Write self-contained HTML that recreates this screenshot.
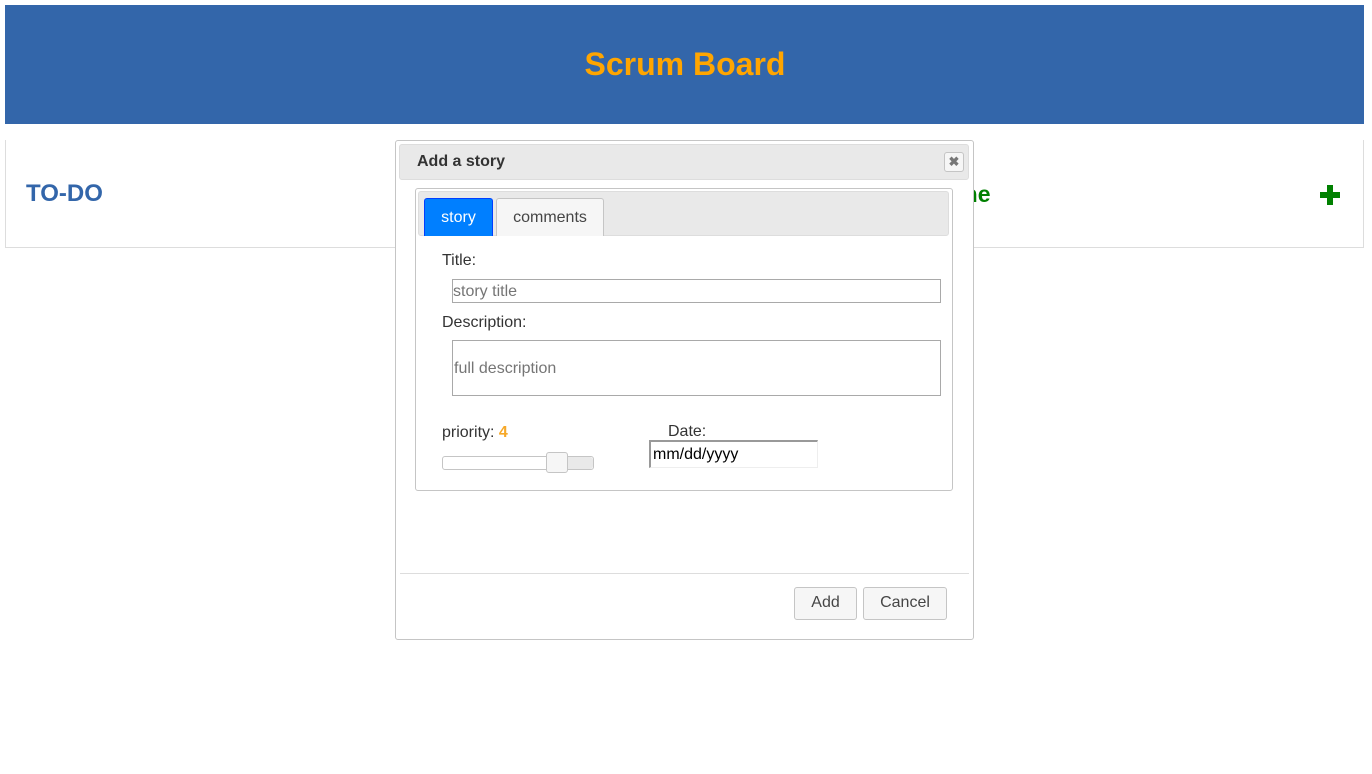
<!DOCTYPE html>
<html><head><meta charset="utf-8"><style>
*{box-sizing:border-box;margin:0;padding:0}
body{width:1372px;height:774px;background:#fff;font-family:"Liberation Sans",Arial,sans-serif;position:relative;overflow:hidden}
.abs{position:absolute}
</style></head><body>
<div class="abs" style="left:5px;top:5px;width:1359px;height:119px;background:#3366aa"></div>
<div class="abs" style="left:-1px;top:45px;width:1372px;text-align:center;color:#ffa500;font-weight:bold;font-size:32px;line-height:38px">Scrum Board</div>
<div class="abs" style="left:5px;top:140px;width:1359px;height:108px;border:1px solid #ddd;border-top:none"></div>
<div class="abs" style="left:26px;top:180px;color:#3366aa;font-weight:bold;font-size:24px">TO-DO</div>
<div class="abs" style="left:933px;top:181px;color:#008000;font-weight:bold;font-size:23px">Done</div>
<svg class="abs" style="left:1320px;top:185px" width="20" height="20" viewBox="0 0 20 20"><rect x="7" y="0" width="6" height="20" fill="#008000"/><rect x="0" y="7" width="20" height="6" fill="#008000"/></svg>

<div class="abs" style="left:395px;top:140px;width:579px;height:500px;background:#fff;border:1px solid #c5c5c5;border-radius:3px"></div>
<div class="abs" style="left:399px;top:144px;width:570px;height:36px;background:#e9e9e9;border:1px solid #ddd;border-radius:3px"></div>
<div class="abs" style="left:417px;top:152px;font-weight:bold;font-size:16px;color:#333;line-height:19px">Add a story</div>
<div class="abs" style="left:944px;top:152px;width:20px;height:20px;border:1px solid #c5c5c5;border-radius:3px;background:#f6f6f6;color:#777;font-size:13px;text-align:center;line-height:18px;font-weight:bold">✖</div>

<div class="abs" style="left:415px;top:188px;width:538px;height:303px;border:1px solid #c5c5c5;border-radius:3px"></div>
<div class="abs" style="left:418px;top:191px;width:531px;height:45px;background:#e9e9e9;border:1px solid #ddd;border-radius:3px"></div>
<div class="abs" style="left:424px;top:198px;width:69px;height:38px;background:#007fff;border:1px solid #003eff;border-bottom:none;border-radius:3px 3px 0 0;color:#fff;font-size:16px;text-align:center;line-height:37px">story</div>
<div class="abs" style="left:496px;top:198px;width:108px;height:38px;background:#f6f6f6;border:1px solid #c5c5c5;border-bottom:none;border-radius:3px 3px 0 0;color:#454545;font-size:16px;text-align:center;line-height:37px">comments</div>

<div class="abs" style="left:442px;top:252px;font-size:16px;color:#333">Title:</div>
<div class="abs" style="left:452px;top:279px;width:489px;height:24px;border:1px solid #a9a9a9;font-size:16px;color:#757575;line-height:23px;padding-left:0">story title</div>
<div class="abs" style="left:442px;top:314px;font-size:16px;color:#333">Description:</div>
<div class="abs" style="left:452px;top:340px;width:489px;height:56px;border:1px solid #a9a9a9;font-size:16px;color:#757575;line-height:55px;padding-left:1px">full description</div>

<div class="abs" style="left:442px;top:424px;font-size:16px;color:#333">priority: <b style="color:#f6a828">4</b></div>
<div class="abs" style="left:442px;top:456px;width:152px;height:14px;border:1px solid #c5c5c5;border-radius:3px;background:#fff"></div>
<div class="abs" style="left:555px;top:457px;width:38px;height:12px;background:#e9e9e9;border-radius:0 3px 3px 0"></div>
<div class="abs" style="left:546px;top:452px;width:22px;height:21px;border:1px solid #c5c5c5;border-radius:3px;background:#f6f6f6"></div>

<div class="abs" style="left:668px;top:423px;font-size:16px;color:#333">Date:</div>
<div class="abs" style="left:649px;top:440px;width:169px;height:28px;border-style:solid;border-color:#999 #eee #eee #999;border-width:2px 1px 1px 2px;font-size:16px;color:#000;line-height:25px;padding-left:2px">mm/dd/yyyy</div>

<div class="abs" style="left:400px;top:573px;width:569px;height:1px;background:#ddd"></div>
<div class="abs" style="left:794px;top:587px;width:63px;height:33px;border:1px solid #c5c5c5;border-radius:3px;background:#f6f6f6;color:#454545;font-size:16px;text-align:center;line-height:30px">Add</div>
<div class="abs" style="left:863px;top:587px;width:84px;height:33px;border:1px solid #c5c5c5;border-radius:3px;background:#f6f6f6;color:#454545;font-size:16px;text-align:center;line-height:30px">Cancel</div>
</body></html>
